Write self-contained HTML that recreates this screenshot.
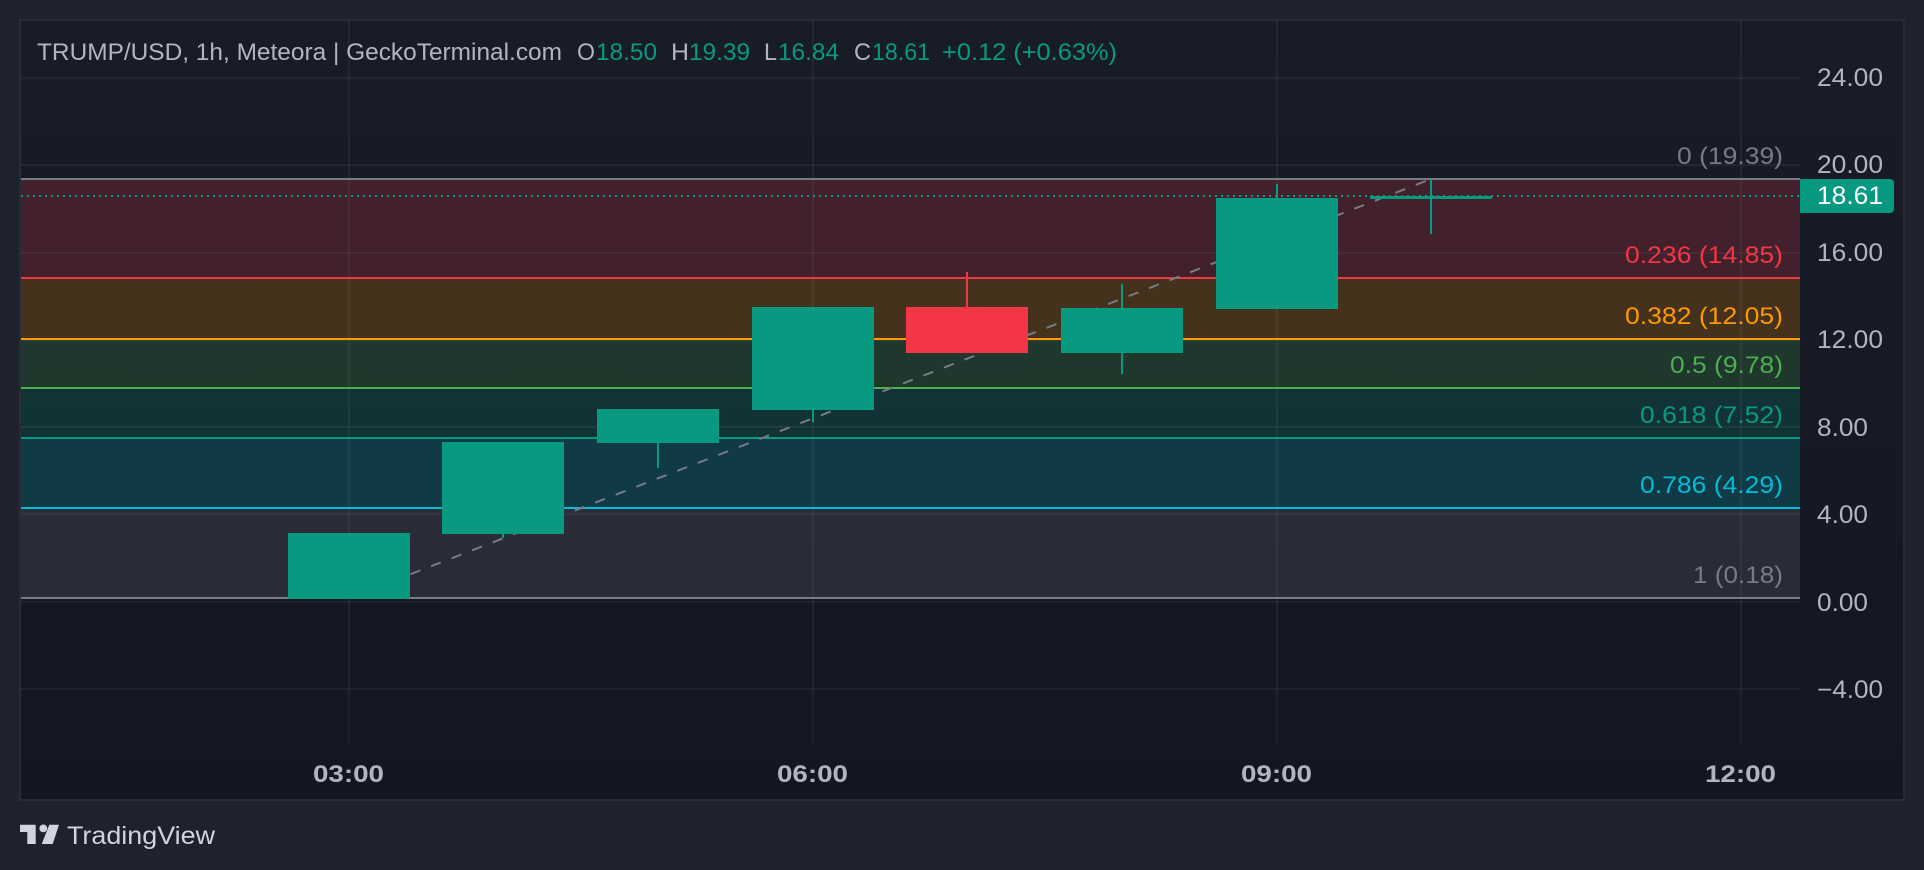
<!DOCTYPE html>
<html><head><meta charset="utf-8"><title>TRUMP/USD</title>
<style>
html,body{margin:0;padding:0;width:1924px;height:870px;overflow:hidden;background:#1e222d}
svg{display:block}
text{font-family:"Liberation Sans",sans-serif;font-size:24.5px;fill:#b2b5be}
.g{fill:#089981}
.t{font-weight:700;font-size:24px}
.a{font-size:25px}
</style></head><body>
<svg width="1924" height="870" viewBox="0 0 1924 870" xmlns="http://www.w3.org/2000/svg">
<defs><linearGradient id="bg" x1="0" y1="0" x2="0" y2="1"><stop offset="0" stop-color="#181c27"/><stop offset="1" stop-color="#131722"/></linearGradient></defs>
<rect width="1924" height="870" fill="#1e222d"/>
<rect x="20" y="20" width="1884" height="780" fill="url(#bg)" stroke="#282c37" stroke-width="2"/>
<!-- fills -->
<rect x="21" y="179" width="1779" height="99" fill="#f23645" fill-opacity=".2"/>
<rect x="21" y="278" width="1779" height="61" fill="#ff9800" fill-opacity=".2"/>
<rect x="21" y="339" width="1779" height="49" fill="#4caf50" fill-opacity=".2"/>
<rect x="21" y="388" width="1779" height="50" fill="#089981" fill-opacity=".2"/>
<rect x="21" y="438" width="1779" height="70" fill="#00bcd4" fill-opacity=".2"/>
<rect x="21" y="508" width="1779" height="90" fill="#787b86" fill-opacity=".2"/>
<!-- grid -->
<g fill="#fff" fill-opacity=".05">
<rect x="21" y="77" width="1779" height="2"/><rect x="21" y="164" width="1779" height="2"/><rect x="21" y="252" width="1779" height="2"/><rect x="21" y="339" width="1779" height="2"/><rect x="21" y="426" width="1779" height="2"/><rect x="21" y="513" width="1779" height="2"/><rect x="21" y="601" width="1779" height="2"/><rect x="21" y="688" width="1779" height="2"/>
<rect x="348" y="21" width="2" height="722"/><rect x="812" y="21" width="2" height="722"/><rect x="1276" y="21" width="2" height="722"/><rect x="1740" y="21" width="2" height="722"/>
</g>
<!-- fib lines -->
<rect x="21" y="178" width="1779" height="2" fill="#787b86"/>
<rect x="21" y="277" width="1779" height="2" fill="#f23645"/>
<rect x="21" y="338" width="1779" height="2" fill="#ff9800"/>
<rect x="21" y="387" width="1779" height="2" fill="#4caf50"/>
<rect x="21" y="437" width="1779" height="2" fill="#089981"/>
<rect x="21" y="507" width="1779" height="2" fill="#00bcd4"/>
<rect x="21" y="597" width="1779" height="2" fill="#787b86"/>
<!-- trend -->
<line x1="349" y1="598" x2="1431" y2="179" stroke="#787b86" stroke-width="2" stroke-dasharray="10.5 11.5"/>
<!-- price line -->
<line x1="21" y1="196" x2="1800" y2="196" stroke="#089981" stroke-width="2" stroke-dasharray="2 4"/>
<!-- candles -->
<g fill="#089981">
<rect x="288" y="533" width="122" height="66"/>
<rect x="442" y="442" width="122" height="92"/><rect x="502" y="534" width="2" height="4"/>
<rect x="597" y="409" width="122" height="34"/><rect x="657" y="443" width="2" height="25"/>
<rect x="752" y="307" width="122" height="103"/><rect x="812" y="410" width="2" height="12"/>
<rect x="1061" y="308" width="122" height="45"/><rect x="1121" y="284" width="2" height="90"/>
<rect x="1216" y="198" width="122" height="111"/><rect x="1276" y="184" width="2" height="14"/>
<rect x="1370" y="196" width="122" height="3"/><rect x="1430" y="179" width="2" height="55"/>
</g>
<g fill="#f23645"><rect x="906" y="307" width="122" height="46"/><rect x="966" y="272" width="2" height="35"/></g>
<!-- legend -->
<text x="37" y="60" textLength="525" lengthAdjust="spacingAndGlyphs">TRUMP/USD, 1h, Meteora | GeckoTerminal.com</text>
<text x="577" y="60" textLength="18" lengthAdjust="spacingAndGlyphs">O</text><text class="g" x="596" y="60" textLength="61" lengthAdjust="spacingAndGlyphs">18.50</text>
<text x="671" y="60" textLength="18" lengthAdjust="spacingAndGlyphs">H</text><text class="g" x="689" y="60" textLength="61" lengthAdjust="spacingAndGlyphs">19.39</text>
<text x="764" y="60" textLength="13" lengthAdjust="spacingAndGlyphs">L</text><text class="g" x="778" y="60" textLength="61" lengthAdjust="spacingAndGlyphs">16.84</text>
<text x="854" y="60" textLength="17" lengthAdjust="spacingAndGlyphs">C</text><text class="g" x="872" y="60" textLength="58" lengthAdjust="spacingAndGlyphs">18.61</text>
<text class="g" x="942" y="60" textLength="175" lengthAdjust="spacingAndGlyphs">+0.12 (+0.63%)</text>
<!-- fib labels -->
<text x="1677" y="164" textLength="106" lengthAdjust="spacingAndGlyphs" style="fill:#787b86">0 (19.39)</text>
<text x="1625" y="263" textLength="158" lengthAdjust="spacingAndGlyphs" style="fill:#f23645">0.236 (14.85)</text>
<text x="1625" y="324" textLength="158" lengthAdjust="spacingAndGlyphs" style="fill:#ff9800">0.382 (12.05)</text>
<text x="1670" y="373" textLength="113" lengthAdjust="spacingAndGlyphs" style="fill:#4caf50">0.5 (9.78)</text>
<text x="1640" y="423" textLength="143" lengthAdjust="spacingAndGlyphs" style="fill:#089981">0.618 (7.52)</text>
<text x="1640" y="493" textLength="143" lengthAdjust="spacingAndGlyphs" style="fill:#00bcd4">0.786 (4.29)</text>
<text x="1693" y="583" textLength="90" lengthAdjust="spacingAndGlyphs" style="fill:#787b86">1 (0.18)</text>
<!-- price axis -->
<text class="a" x="1817" y="86" textLength="66" lengthAdjust="spacingAndGlyphs">24.00</text>
<text class="a" x="1817" y="173" textLength="66" lengthAdjust="spacingAndGlyphs">20.00</text>
<text class="a" x="1817" y="261" textLength="66" lengthAdjust="spacingAndGlyphs">16.00</text>
<text class="a" x="1817" y="348" textLength="66" lengthAdjust="spacingAndGlyphs">12.00</text>
<text class="a" x="1817" y="436" textLength="51" lengthAdjust="spacingAndGlyphs">8.00</text>
<text class="a" x="1817" y="523" textLength="51" lengthAdjust="spacingAndGlyphs">4.00</text>
<text class="a" x="1817" y="611" textLength="51" lengthAdjust="spacingAndGlyphs">0.00</text>
<text class="a" x="1817" y="698" textLength="66" lengthAdjust="spacingAndGlyphs">−4.00</text>
<path d="M1800 179h90a4 4 0 0 1 4 4v26a4 4 0 0 1-4 4h-90z" fill="#089981"/>
<text class="a" x="1817" y="204" textLength="66" lengthAdjust="spacingAndGlyphs" style="fill:#fff">18.61</text>
<!-- time axis -->
<text class="t" x="313" y="782" textLength="71" lengthAdjust="spacingAndGlyphs">03:00</text>
<text class="t" x="777" y="782" textLength="71" lengthAdjust="spacingAndGlyphs">06:00</text>
<text class="t" x="1241" y="782" textLength="71" lengthAdjust="spacingAndGlyphs">09:00</text>
<text class="t" x="1705" y="782" textLength="71" lengthAdjust="spacingAndGlyphs">12:00</text>
<!-- logo -->
<g fill="#d1d4dc"><path d="M20 824.7H35.7V844H27.3V832H20z"/><circle cx="43.3" cy="828.4" r="3.9"/><path d="M49.3 824.7H59L52.7 844H41.7z"/></g>
<text x="67" y="844" textLength="148" lengthAdjust="spacingAndGlyphs" style="font-size:25px;fill:#d1d4dc">TradingView</text>
</svg>
</body></html>
